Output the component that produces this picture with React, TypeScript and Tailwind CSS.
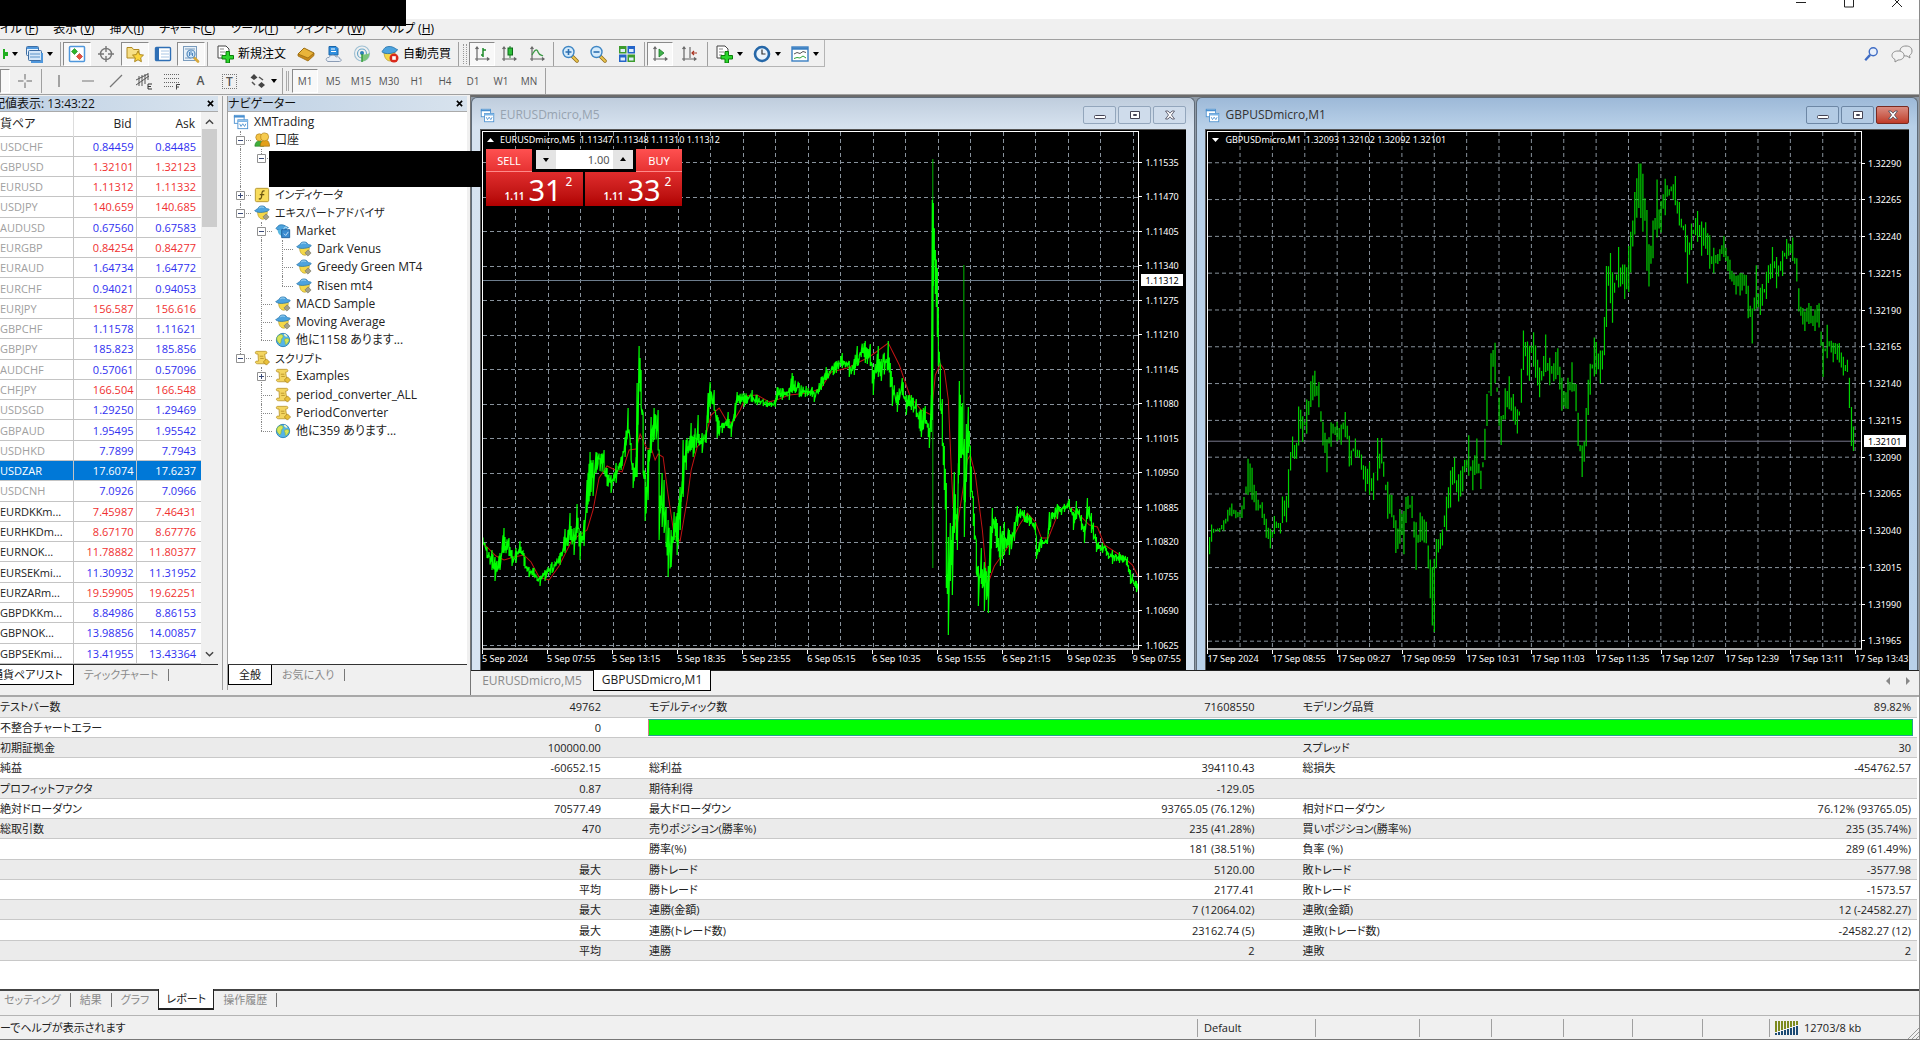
import type { ReactNode } from "react"
import clsx from "clsx"

type Bar = [number, number, number]

const quotes: [string, string, string, string][] = [
  ["USDCHF", "0.84459", "0.84485", "up"],
  ["GBPUSD", "1.32101", "1.32123", "down"],
  ["EURUSD", "1.11312", "1.11332", "down"],
  ["USDJPY", "140.659", "140.685", "down"],
  ["AUDUSD", "0.67560", "0.67583", "up"],
  ["EURGBP", "0.84254", "0.84277", "down"],
  ["EURAUD", "1.64734", "1.64772", "up"],
  ["EURCHF", "0.94021", "0.94053", "up"],
  ["EURJPY", "156.587", "156.616", "down"],
  ["GBPCHF", "1.11578", "1.11621", "up"],
  ["GBPJPY", "185.823", "185.856", "up"],
  ["AUDCHF", "0.57061", "0.57096", "up"],
  ["CHFJPY", "166.504", "166.548", "down"],
  ["USDSGD", "1.29250", "1.29469", "up"],
  ["GBPAUD", "1.95495", "1.95542", "up"],
  ["USDHKD", "7.7899", "7.7943", "up"],
  ["USDZAR", "17.6074", "17.6237", "selected"],
  ["USDCNH", "7.0926", "7.0966", "up"],
  ["EURDKKm...", "7.45987", "7.46431", "down"],
  ["EURHKDm...", "8.67170", "8.67776", "down"],
  ["EURNOK...", "11.78882", "11.80377", "down"],
  ["EURSEKmi...", "11.30932", "11.31952", "up"],
  ["EURZARm...", "19.59905", "19.62251", "down"],
  ["GBPDKKm...", "8.84986", "8.86153", "up"],
  ["GBPNOK...", "13.98856", "14.00857", "up"],
  ["GBPSEKmi...", "13.41955", "13.43364", "up"],
]

// guides: one character per indent column
// "|" line, "t" branch, "l" last branch, "-" open node, "+" closed node, "e" open last node
const tree: { guides: string; icon: string; label: string }[] = [
  { guides: "", icon: "windows", label: "XMTrading" },
  { guides: "-", icon: "accounts", label: "口座" },
  { guides: "|e", icon: "", label: "" },
  { guides: "|", icon: "", label: "" },
  { guides: "+", icon: "indicator", label: "インディケータ" },
  { guides: "-", icon: "expert", label: "エキスパートアドバイザ" },
  { guides: "|-", icon: "market", label: "Market" },
  { guides: "||t", icon: "expert", label: "Dark Venus" },
  { guides: "||t", icon: "expert", label: "Greedy Green MT4" },
  { guides: "||l", icon: "expert", label: "Risen mt4" },
  { guides: "|t", icon: "expert", label: "MACD Sample" },
  { guides: "|t", icon: "expert", label: "Moving Average" },
  { guides: "|l", icon: "globe", label: "他に1158 あります..." },
  { guides: "e", icon: "script", label: "スクリプト" },
  { guides: " +", icon: "script", label: "Examples" },
  { guides: " t", icon: "script", label: "period_converter_ALL" },
  { guides: " t", icon: "script", label: "PeriodConverter" },
  { guides: " l", icon: "globe", label: "他に359 あります..." },
]

const report: string[][] = [
  ["テストバー数", "49762", "モデルティック数", "71608550", "モデリング品質", "89.82%"],
  ["不整合チャートエラー", "0", "bar"],
  ["初期証拠金", "100000.00", "", "", "スプレッド", "30"],
  ["純益", "-60652.15", "総利益", "394110.43", "総損失", "-454762.57"],
  ["プロフィットファクタ", "0.87", "期待利得", "-129.05", "", ""],
  ["絶対ドローダウン", "70577.49", "最大ドローダウン", "93765.05 (76.12%)", "相対ドローダウン", "76.12% (93765.05)"],
  ["総取引数", "470", "売りポジション(勝率%)", "235 (41.28%)", "買いポジション(勝率%)", "235 (35.74%)"],
  ["", "", "勝率(%)", "181 (38.51%)", "負率 (%)", "289 (61.49%)"],
  ["", "最大", "勝トレード", "5120.00", "敗トレード", "-3577.98"],
  ["", "平均", "勝トレード", "2177.41", "敗トレード", "-1573.57"],
  ["", "最大", "連勝(金額)", "7 (12064.02)", "連敗(金額)", "12 (-24582.27)"],
  ["", "最大", "連勝(トレード数)", "23162.74 (5)", "連敗(トレード数)", "-24582.27 (12)"],
  ["", "平均", "連勝", "2", "連敗", "2"],
]

const eurusd: Bar[] = [
  [483, 533, 541], [488, 547, 558], [493, 550, 570], [496, 557, 581], [501, 553, 570], [505, 528, 553],
  [510, 538, 556], [513, 550, 566], [517, 548, 563], [521, 541, 553], [525, 553, 566], [530, 567, 577],
  [535, 568, 577], [541, 577, 586], [546, 570, 581], [553, 562, 573], [561, 553, 565], [566, 529, 553],
  [569, 530, 546], [571, 513, 540], [575, 528, 555], [578, 504, 533], [581, 533, 560], [585, 520, 546],
  [588, 480, 513], [591, 452, 496], [594, 460, 496], [597, 452, 473], [605, 450, 473], [608, 468, 486],
  [612, 475, 493], [617, 463, 483], [622, 457, 470], [626, 437, 457], [629, 408, 433], [632, 443, 460],
  [634, 463, 488], [637, 457, 477], [638, 383, 477], [640, 346, 383], [642, 370, 407], [644, 413, 473],
  [646, 473, 521], [649, 450, 500], [652, 417, 453], [655, 408, 440], [659, 410, 450], [660, 450, 540],
  [663, 473, 527], [665, 480, 533], [667, 507, 547], [669, 520, 577], [672, 530, 567], [675, 512, 540],
  [678, 513, 555], [681, 487, 530], [684, 440, 497], [687, 440, 470], [692, 423, 450], [694, 437, 457],
  [699, 415, 443], [703, 433, 453], [707, 430, 443], [709, 393, 423], [711, 382, 407], [715, 390, 410],
  [718, 415, 438], [723, 423, 433], [729, 412, 428], [732, 423, 437], [736, 403, 418], [738, 392, 403],
  [745, 393, 407], [753, 390, 402], [758, 395, 405], [768, 400, 407], [776, 400, 407], [778, 387, 400],
  [783, 388, 400], [790, 388, 400], [793, 373, 393], [800, 383, 397], [813, 387, 397], [815, 393, 402],
  [822, 377, 390], [827, 367, 380], [837, 361, 373], [843, 353, 368], [850, 361, 377], [855, 359, 375],
  [858, 346, 366], [866, 341, 363], [871, 344, 366], [874, 370, 395], [879, 346, 377], [882, 359, 381],
  [889, 341, 370], [893, 377, 406], [898, 392, 412], [903, 378, 395], [907, 395, 415], [912, 395, 410],
  [917, 399, 417], [922, 410, 437], [926, 406, 423], [930, 428, 448], [932, 395, 432], [933, 200, 420],
  [934, 203, 286], [936, 250, 294], [938, 268, 337], [939, 308, 366], [941, 366, 410], [943, 399, 446],
  [945, 446, 490], [947, 483, 588], [949, 537, 635], [951, 523, 581], [953, 526, 595], [955, 472, 533],
  [958, 508, 550], [960, 381, 475], [963, 403, 453], [965, 439, 537], [967, 424, 482], [969, 407, 453],
  [971, 446, 497], [974, 497, 526], [977, 541, 573], [979, 566, 606], [982, 548, 584], [985, 562, 611],
  [989, 566, 613], [991, 526, 573], [993, 508, 533], [997, 519, 548], [1001, 526, 566], [1005, 522, 555],
  [1010, 530, 555], [1015, 522, 541], [1018, 506, 526], [1025, 510, 522], [1030, 515, 526], [1036, 522, 532],
  [1037, 537, 559], [1042, 537, 548], [1048, 539, 544], [1050, 512, 530], [1058, 504, 519], [1065, 504, 512],
  [1070, 499, 508], [1074, 512, 530], [1077, 501, 519], [1082, 515, 530], [1085, 526, 543], [1088, 498, 519],
  [1092, 513, 533], [1097, 537, 552], [1103, 543, 553], [1113, 550, 564], [1120, 552, 563], [1128, 557, 566],
  [1131, 570, 584], [1137, 581, 592], [1140, 583, 588],
]

const average =
  "483,542 497,556 505,560 515,557 525,555 532,562 540,577 550,580 560,566 573,540 588,530 594,510 600,478 608,466 616,470 623,472 630,450 637,449 641,434 648,449 652,448 656,460 659,454 664,457 669,495 675,535 681,541 688,500 692,470 698,447 706,438 712,415 720,408 727,420 733,423 741,410 747,396 758,395 770,402 780,399 790,395 810,393 822,388 832,372 848,368 870,357 889,343 900,365 911,397 922,410 932,415 936,375 941,364 945,370 949,400 952,470 954,510 957,530 962,500 968,460 971,455 976,475 983,530 988,585 995,566 1010,545 1020,525 1028,513 1036,522 1042,538 1049,538 1060,510 1068,505 1080,515 1090,525 1098,527 1105,545 1125,558 1133,565 1139,577"

const gbpusd: Bar[] = [
  [42, 1170, 1240], [50, 1115, 1165], [55, 1128, 1138], [75, 1112, 1138], [85, 1080, 1110], [95, 1062, 1095],
  [105, 1085, 1102], [118, 1065, 1100], [128, 945, 1040], [137, 965, 1050], [148, 1040, 1085], [160, 1060, 1100],
  [170, 1110, 1160], [178, 1130, 1180], [187, 1090, 1135], [200, 1115, 1140], [205, 1010, 1100], [211, 1060, 1120],
  [218, 950, 1060], [225, 890, 945], [233, 925, 955], [240, 775, 900], [247, 840, 905], [255, 800, 890],
  [263, 755, 820], [272, 718, 785], [283, 755, 820], [290, 850, 910], [299, 900, 985], [306, 855, 920],
  [320, 850, 900], [328, 870, 920], [337, 818, 880], [348, 895, 975], [360, 895, 945], [372, 930, 965],
  [380, 970, 1030], [390, 955, 1040], [400, 985, 1055], [407, 895, 1010], [417, 895, 960], [428, 1000, 1105],
  [438, 1035, 1090], [448, 1110, 1195], [458, 1070, 1160], [464, 1090, 1210], [470, 1040, 1100], [484, 1045, 1100],
  [492, 1120, 1250], [500, 1085, 1160], [513, 1110, 1165], [520, 1200, 1280], [527, 1230, 1393], [531, 1200, 1393], [535, 1150, 1215],
  [548, 1130, 1170], [557, 1040, 1130], [567, 965, 1060], [574, 945, 1010], [582, 990, 1060], [592, 965, 1030],
  [605, 885, 990], [612, 960, 1035], [622, 895, 985], [630, 985, 1030], [638, 900, 980], [643, 790, 870],
  [652, 680, 790], [660, 630, 740], [668, 770, 840], [674, 840, 915], [682, 770, 850], [692, 735, 820],
  [700, 780, 850], [711, 830, 890], [716, 760, 840], [722, 618, 720], [735, 660, 750], [742, 608, 700],
  [750, 670, 750], [758, 720, 795], [769, 620, 720], [778, 690, 760], [790, 680, 750], [796, 662, 730],
  [805, 740, 825], [818, 740, 820], [828, 695, 770], [836, 760, 830], [841, 850, 940], [848, 920, 1000],
  [856, 840, 940], [862, 740, 830], [873, 632, 740], [880, 650, 730], [888, 670, 755], [895, 640, 710],
  [900, 460, 620], [908, 402, 530], [915, 480, 610], [928, 398, 500], [938, 460, 540], [948, 410, 530],
  [955, 350, 450], [963, 250, 360], [970, 190, 300], [975, 190, 330], [980, 220, 370], [986, 260, 440], [992, 400, 510],
  [1000, 350, 440], [1010, 230, 380], [1018, 290, 370], [1028, 225, 320], [1048, 213, 290], [1058, 290, 350],
  [1070, 340, 400], [1076, 380, 510], [1085, 340, 400], [1098, 310, 390], [1105, 340, 430], [1113, 335, 400],
  [1125, 380, 470], [1133, 410, 472], [1145, 410, 440], [1154, 375, 430], [1165, 430, 480], [1178, 480, 525],
  [1190, 470, 530], [1200, 465, 500], [1207, 510, 600], [1216, 570, 660], [1222, 440, 560], [1232, 510, 580],
  [1245, 470, 540], [1257, 400, 480], [1267, 430, 510], [1280, 415, 480], [1290, 380, 430], [1302, 380, 440],
  [1312, 440, 500], [1316, 530, 590], [1328, 570, 620], [1338, 545, 600], [1348, 570, 625], [1358, 540, 600],
  [1367, 650, 740], [1378, 595, 680], [1388, 650, 700], [1402, 650, 700], [1412, 690, 738], [1422, 695, 750],
  [1427, 800, 910], [1436, 890, 940],
]

// walks the high/low envelope and gives the bars a little jitter
const expand = (keys: Bar[], step: number, jitter: number): Bar[] => {
  let seed = 7
  const rand = () => {
    seed = (seed * 16807) % 2147483647
    return seed / 2147483647
  }
  const out: Bar[] = []
  let k = 0
  for (let x = keys[0][0]; x <= keys[keys.length - 1][0]; x += step) {
    while (k < keys.length - 2 && keys[k + 1][0] < x) k++
    const [ax, at, ab] = keys[k]
    const [bx, bt, bb] = keys[k + 1]
    const near = Math.abs(x - ax) < step / 2 || Math.abs(x - bx) < step / 2
    const f = (x - ax) / (bx - ax)
    const top = at + (bt - at) * f
    const bottom = ab + (bb - ab) * f
    const h = near ? 0 : (bottom - top) * jitter
    out.push([x, top + rand() * h, bottom - rand() * h])
  }
  return out
}

const zigzag = (keys: Bar[]) =>
  expand(keys, 1, 0.7).map(([x, t, b], i) => `${i ? "L" : "M"}${x} ${t.toFixed(1)}V${b.toFixed(1)}`).join("")

const sticks = (keys: Bar[]) =>
  expand(keys, 4.36, 0.5).map(([x, t, b]) => `M${x.toFixed(1)} ${b.toFixed(0)}V${t.toFixed(0)}`).join("")

const range = (n: number) => Array.from({ length: n }, (_, i) => i)

/* ---------- icons ---------- */

const Svg = ({ children, className = "size-[18px]" }: { children: ReactNode; className?: string }) => (
  <svg viewBox="0 0 18 18" fill="none" className={clsx("shrink-0", className)} aria-hidden="true">
    {children}
  </svg>
)

const PlusDoc = () => (
  <Svg>
    <path d="M2 1h8l3 3v9H2z" fill="#fff" stroke="#444" />
    <path d="M4 4h4M4 7h5M4 10h3" stroke="#888" />
    <path d="M10 6.500h3.500v4H17.500v3.500h-4v4H10v-4H6v-3.500h4z" fill="#2bd52b" stroke="#0b7d0b" />
  </Svg>
)

const WindowsIcon = () => (
  <Svg>
    <rect x="1.500" y="1.500" width="11" height="9" fill="#fff" stroke="#4a90d0" />
    <path d="M1 3h12" stroke="#4a90d0" strokeWidth="2" />
    <rect x="5.500" y="6.500" width="11" height="10" fill="#fff" stroke="#4a90d0" />
    <path d="M5 8h12" stroke="#7fb6e6" strokeWidth="2" />
    <path d="m7.500 11 1.500 3 2-3 2 3 1.500-3" stroke="#4a90d0" />
  </Svg>
)

const LayersIcon = () => (
  <Svg>
    <rect x="1.500" y="1.500" width="12" height="9" rx="1" fill="#e9f3fc" stroke="#3d6ea5" />
    <path d="M2 3h11" stroke="#4f97dc" strokeWidth="2" />
    <rect x="3.500" y="5.500" width="13" height="10" rx="1" fill="#d4e7f8" stroke="#3d6ea5" />
    <path d="M5 9h10M5 12h10" stroke="#5b93c8" />
    <path d="M6 17h11V8" stroke="#4f97dc" strokeWidth="2" />
  </Svg>
)

const ExpertIcon = () => (
  <Svg>
    <path d="M4 7.500c0 6 3 8.500 6 8.500s5-4 5-9z" fill="#f5d848" stroke="#a68a1d" strokeWidth=".6" />
    <path d="M.8 6.500C2 4.500 4.500 5 5 3c.8-2.600 7-2.600 8 0 .6 1.500 3.500.8 4.200 2.200-1 2.800-13 4.800-16.400 1.300z" fill="#4da3dd" stroke="#1f6fa8" strokeWidth=".8" />
    <path d="M6 3.200c1-1.200 4-1.200 5-.4" stroke="#b6e0f7" />
    <path d="m13.500 10 3.500 3.500-3.500 3.500-3.500-3.500z" fill="#a3a089" stroke="#77745f" strokeWidth=".7" />
  </Svg>
)

const ScriptIcon = () => (
  <Svg>
    <path d="M3 1.500h10c2 0 2 3 0 3h-1l1 7v4H4c-3 0-3-3-1-3h2l-.5-8H3c-2 0-2-3 0-3z" fill="#f3d560" stroke="#b8932a" strokeWidth=".9" />
    <path d="M6.500 7h4M7 9.500h4" stroke="#b8932a" />
    <path d="m14 10 3.500 3.500L14 17l-3.500-3.500z" fill="#e9c03a" stroke="#a57c15" strokeWidth=".8" />
  </Svg>
)

const treeIcons: Record<string, ReactNode> = {
  windows: <WindowsIcon />,
  expert: <ExpertIcon />,
  script: <ScriptIcon />,
  accounts: (
    <Svg>
      <path d="M1 16c0-4 2-6 5-6s5 2 5 6z" fill="#3fae3a" stroke="#25802a" strokeWidth=".7" />
      <circle cx="6" cy="6" r="4" fill="#f3c244" stroke="#a97a13" strokeWidth=".7" />
      <path d="M7 16c0-4 2-7 5.500-7s5 3 5 7z" fill="#e3a01b" stroke="#9b6b0e" strokeWidth=".7" />
      <circle cx="12" cy="5.500" r="4.500" fill="#f6cb4f" stroke="#a97a13" strokeWidth=".7" />
    </Svg>
  ),
  indicator: (
    <Svg>
      <rect x="1.500" y="1.500" width="15" height="15" rx="1.500" fill="#f8dc5c" stroke="#b1922a" />
      <path d="M12 4.500c-4-1-3 4-3.500 6.500S6.500 14 5.500 13M6.500 8.500h5" stroke="#6b5510" strokeWidth="1.400" />
    </Svg>
  ),
  market: (
    <Svg>
      <path d="M1 6c2-1 2-4 6-4s5 2 8 3c-1 4-12 5-14 1z" fill="#4da3dd" stroke="#1f6fa8" strokeWidth=".8" />
      <path d="M3 8c0 4 2 6 5 7V8z" fill="#59b7e0" />
      <path d="M7.500 7.500h9v9h-9z" fill="#3a8bd0" stroke="#1d5d99" />
      <path d="M10 7c0-3 4-3 4 0M10 12l2 2 3-4" stroke="#cfe8fa" />
    </Svg>
  ),
  globe: (
    <Svg>
      <circle cx="9" cy="9" r="7.500" fill="#55b4e8" stroke="#2b7fb5" />
      <path d="M4 4c3-2 5-1 5 1S7 7 7 9s-1 5-2 4-3-3-3-5 1-3 2-4zM11 8c2-1 4-1 5 1-1 3-3 5-4 5s0-3-1-4 0-1 0-2z" fill="#d7e45a" stroke="#7fae2f" strokeWidth=".6" />
      <path d="M10 2c2 0 3 1 4 3-1 1-4 0-4-3z" fill="#f4f7c4" />
    </Svg>
  ),
}

const Axes = ({ children }: { children: ReactNode }) => (
  <Svg>
    <path d="M4 2v14M2 14h14M2.500 4 4 2l1.500 2M14 12.500l2 1.500-2 1.500" stroke="#666" strokeWidth="1.200" />
    {children}
  </Svg>
)

const Magnifier = ({ sign }: { sign: "plus" | "minus" }) => (
  <Svg>
    <path d="m11 11 5 5" stroke="#8f6a17" strokeWidth="3.500" strokeLinecap="round" />
    <path d="m11 11 5 5" stroke="#eac54d" strokeWidth="2" strokeLinecap="round" />
    <circle cx="7.500" cy="7" r="5.500" fill="#d5ebfb" stroke="#3f86c4" strokeWidth="1.400" />
    <path d={sign === "plus" ? "M4.500 7h6M7.500 4v6" : "M4.500 7h6"} stroke="#2d6fb0" strokeWidth="1.600" />
  </Svg>
)

const Caret = () => (
  <svg viewBox="0 0 6 4" className="h-1 w-[6px] shrink-0" aria-hidden="true">
    <path d="M0 0h6L3 4z" fill="#000" />
  </svg>
)

/* ---------- toolbars ---------- */

const ToolButton = ({ label, pressed, className = "w-7", children }: { label: string; pressed?: boolean; className?: string; children: ReactNode }) => (
  <button
    type="button"
    aria-label={label}
    className={clsx(
      "flex h-6 shrink-0 items-center justify-center gap-1 border",
      pressed ? "border-t-[#8a8a8a] border-l-[#8a8a8a] border-r-white border-b-white bg-[#f8f8f8]" : "border-transparent",
      className
    )}
  >
    {children}
  </button>
)

const Divider = () => <div className="mx-[2px] h-6 w-px shrink-0 bg-[#a0a0a0]" />

const Grip = () => <div className="mx-[2px] h-5 w-1 shrink-0 border-x border-dotted border-[#999]" />

const menus: [string, string][] = [
  ["イル (", "F"],
  ["表示 (", "V"],
  ["挿入(", "I"],
  ["チャート(", "C"],
  ["ツール(", "T"],
  ["ウィンドウ (", "W"],
  ["ヘルプ (", "H"],
]

const TopBars = () => (
  <header>
    <div className="flex h-[19px] items-start justify-end gap-9 bg-white pr-4">
      <button type="button" aria-label="最小化">
        <svg viewBox="0 0 12 9" fill="none" className="h-[9px] w-3"><path d="M1 2.500h10" stroke="#222" /></svg>
      </button>
      <button type="button" aria-label="最大化">
        <svg viewBox="0 0 12 9" fill="none" className="h-[9px] w-3"><path d="M1.500-2v9h9v-9" stroke="#222" /></svg>
      </button>
      <button type="button" aria-label="閉じる">
        <svg viewBox="0 0 12 9" fill="none" className="h-[9px] w-3"><path d="m1-3 10 10M11-3 1 7" stroke="#222" /></svg>
      </button>
    </div>
    <nav className="flex h-[21px] items-center gap-[15px] border-b border-[#a0a0a0] text-[12px] text-black">
      {menus.map(([label, key]) => (
        <button key={key} type="button" className="whitespace-pre leading-4">
          {label}
          <u>{key}</u>)
        </button>
      ))}
    </nav>

    <div className="flex h-[27px] items-center justify-between">
      <div className="flex h-full items-center border-r border-b border-[#b4b4b4] pt-px">
        <ToolButton label="新規チャート" className="w-5">
          <svg viewBox="0 0 5 12" className="h-3 w-[5px]"><path d="M0 4h5v4H0zM0 1h2v10H0z" fill="#1fae1f" /></svg>
          <Caret />
        </ToolButton>
        <ToolButton label="組表示" className="w-[38px]"><LayersIcon /><Caret /></ToolButton>
        <Divider />
        <ToolButton label="気配値表示" pressed>
          <Svg>
            <rect x="1.500" y="1.500" width="15" height="15" rx="1" fill="#fff" stroke="#4f97dc" strokeWidth="1.500" />
            <path d="M6.500 3.500 9.500 6.500 6.500 9.500 3.500 6.500z" fill="#2cb52c" stroke="#1b7d1b" strokeWidth=".6" />
            <path d="M11.500 8.500 14.500 11.500 11.500 14.500 8.500 11.500z" fill="#e8503f" stroke="#b32518" strokeWidth=".6" />
          </Svg>
        </ToolButton>
        <ToolButton label="データウィンドウ" className="w-[30px]">
          <Svg><circle cx="9" cy="9" r="5.500" stroke="#777" strokeWidth="1.400" /><path d="M9 1v6M9 11v6M1 9h6M11 9h6" stroke="#777" strokeWidth="1.400" /></Svg>
        </ToolButton>
        <ToolButton label="ナビゲーター" pressed>
          <Svg>
            <path d="M1 2.500h5l1.500 2H13V13H1z" fill="#f7df86" stroke="#b08a22" />
            <path d="m12 6 1.700 3.600 3.800.5-2.800 2.700.7 3.900-3.400-1.900-3.400 1.900.7-3.900-2.800-2.700 3.800-.5z" fill="#fbd43c" stroke="#a57f16" strokeWidth=".9" />
          </Svg>
        </ToolButton>
        <ToolButton label="ターミナル">
          <Svg>
            <rect x="1.500" y="2.500" width="15" height="13" rx="1" fill="#fff" stroke="#2f6fb5" strokeWidth="1.400" />
            <path d="M3.500 3v12" stroke="#2f6fb5" strokeWidth="3" />
            <path d="M7 6h8M7 9h8M7 12h8" stroke="#a9c6e4" />
          </Svg>
        </ToolButton>
        <ToolButton label="ストラテジーテスター" pressed>
          <Svg>
            <rect x="1.500" y="1.500" width="13" height="14" fill="#e7f0f8" stroke="#7a9cbd" />
            <path d="M3 4h10M3 13h6" stroke="#7a9cbd" />
            <path d="m11.500 12 4.500 4.500" stroke="#d8a93c" strokeWidth="2.600" strokeLinecap="round" />
            <circle cx="9" cy="9" r="4" fill="#cfe5f7" stroke="#5a8dbd" strokeWidth="1.200" />
            <path d="M7.500 7v4M9 6v4M10.500 8v3" stroke="#2d6fb0" strokeWidth=".8" />
          </Svg>
        </ToolButton>
        <Divider />
        <ToolButton label="新規注文" className="w-[82px] text-[12px]">
          <PlusDoc />
          新規注文
        </ToolButton>
        <ToolButton label="MetaEditor">
          <Svg>
            <path d="m1 9 6-6 10 5-6 7z" fill="#e9b43a" stroke="#9c6d12" />
            <path d="m1 9 10 4 6-5v2.500L11 16 1 11z" fill="#c98a1b" stroke="#9c6d12" strokeWidth=".8" />
          </Svg>
        </ToolButton>
        <ToolButton label="ホスティング">
          <Svg>
            <path d="M4 1.500h7l2 2V10H4z" fill="#2f8fe0" stroke="#1c66a8" />
            <path d="M6 4h4M6 6.500h5" stroke="#fff" />
            <path d="M3 16.500c-3-1-2-4.500 1-4 1-3 6-3 7-.5 2-1 4 .5 3.500 1.800 2.500 0 2 2.700 0 2.700z" fill="#e8eef6" stroke="#8b9cb5" />
          </Svg>
        </ToolButton>
        <ToolButton label="シグナル">
          <Svg>
            <circle cx="9" cy="8.500" r="7.500" stroke="#9fc0d3" strokeWidth="1.200" />
            <circle cx="9" cy="8.500" r="4.500" stroke="#6aa7c8" strokeWidth="1.200" />
            <path d="M9 9c3 1 6 0 7.500-1 0 5-3.500 8-7.500 8.500z" fill="#7cc47a" />
            <circle cx="9" cy="8" r="2" fill="#2b7fb5" />
            <path d="M9 9v8" stroke="#2f9a35" strokeWidth="1.400" />
          </Svg>
        </ToolButton>
        <ToolButton label="自動売買" className="w-[80px] text-[12px]">
          <Svg>
            <path d="M3 7c0 6 3 9 6 9s5-4 5-9z" fill="#f5d848" stroke="#a68a1d" strokeWidth=".6" />
            <path d="M.8 6.500c2-1 2-5 7.200-5s6 2.500 8.500 3c-1 4.500-13.700 5.500-15.700 2z" fill="#4da3dd" stroke="#1f6fa8" strokeWidth=".8" />
            <circle cx="13" cy="13" r="4.500" fill="#d9291c" />
            <rect x="11.200" y="11.200" width="3.600" height="3.600" fill="#fff" />
          </Svg>
          自動売買
        </ToolButton>
        <Divider />
        <Grip />
        <ToolButton label="バーチャート" pressed className="w-[26px]"><Axes><path d="M10 3v9M8 10h2M10 5h3" stroke="#1c8a2a" strokeWidth="1.500" /></Axes></ToolButton>
        <ToolButton label="ローソク足"><Axes><path d="M10 1v12" stroke="#1c8a2a" /><rect x="8" y="3" width="4.500" height="7" fill="#2fc13a" stroke="#0f6b1a" /></Axes></ToolButton>
        <ToolButton label="ラインチャート"><Axes><path d="M4 10c3-6 5-6 6-3s3 3 5 4" stroke="#3f9a48" strokeWidth="1.300" /></Axes></ToolButton>
        <Divider />
        <ToolButton label="ズームイン"><Magnifier sign="plus" /></ToolButton>
        <ToolButton label="ズームアウト"><Magnifier sign="minus" /></ToolButton>
        <ToolButton label="整列" className="w-[30px]">
          <Svg>
            <path d="M1 1h7.500v7.500H1zM9.500 9.500H17V17H9.500z" fill="#3d9c2d" />
            <path d="M9.500 1H17v7.500H9.500zM1 9.500h7.500V17H1z" fill="#2464c8" />
            <path d="M2.500 4H7v3H2.500zM11 4h4.500v3H11zM2.500 12.500H7v3H2.500zM11 12.500h4.500v3H11z" fill="#dfeefb" />
          </Svg>
        </ToolButton>
        <Divider />
        <ToolButton label="自動スクロール" pressed className="w-[26px]"><Axes><path d="m8 4 5 4-5 4z" fill="#3fb24b" stroke="#1c7a28" strokeWidth=".8" /></Axes></ToolButton>
        <ToolButton label="チャートシフト" className="w-8"><Axes><path d="M10 2v11" stroke="#555" /><path d="M17 8h-5m2-2-2 2 2 2" stroke="#a8321f" strokeWidth="1.200" /></Axes></ToolButton>
        <Divider />
        <ToolButton label="インディケーター" className="w-[38px]"><PlusDoc /><Caret /></ToolButton>
        <ToolButton label="時間軸" className="w-[38px]">
          <Svg><circle cx="9" cy="9" r="7" fill="#eaf4fc" stroke="#2567a8" strokeWidth="2.600" /><path d="M9 4.500V9h3.500" stroke="#333" strokeWidth="1.200" /></Svg>
          <Caret />
        </ToolButton>
        <ToolButton label="定型チャート" className="w-[38px]">
          <Svg>
            <rect x="1" y="2" width="16" height="14" fill="#fff" stroke="#3a7fc2" strokeWidth="1.400" />
            <path d="M1 3.500h16" stroke="#3a7fc2" strokeWidth="2.500" />
            <path d="m3 9 3-1.500 3 1 3-2 3 1" stroke="#555" />
            <path d="m3 13.500 3-1 3 .5 3-2 3 2" stroke="#2fa33a" />
          </Svg>
          <Caret />
        </ToolButton>
      </div>
      <div className="flex items-center gap-3 pr-[6px]">
        <button type="button" aria-label="検索">
          <Svg className="size-4"><circle cx="11.500" cy="6.500" r="4.500" fill="#e9f0fb" stroke="#3f6cc4" strokeWidth="1.600" /><path d="m8 10-5.500 6" stroke="#3f6cc4" strokeWidth="2.600" /></Svg>
        </button>
        <button type="button" aria-label="チャット">
          <svg viewBox="0 0 22 18" fill="#f2f2f2" stroke="#8c8c8c" className="h-[18px] w-[22px]">
            <path d="M15 1c4 0 6 2 6 5 0 2-1 3.500-2.500 4.500L19 13l-3-2c-5 0-7-2-7-5s2-5 6-5z" />
            <path d="M7 6c4 0 6 2 6 4.500S11 15 7 15l-3 2v-2.500C2 13.500 1 12 1 10.500 1 8 3 6 7 6z" />
          </svg>
        </button>
      </div>
    </div>

    <div className="flex h-[27px] items-center pt-px text-[10px] text-[#555]">
      <div className="flex h-full items-center border-r border-[#a0a0a0]">
        <ToolButton label="カーソル" pressed className="w-[10px]">{null}</ToolButton>
        <ToolButton label="クロスヘア" className="w-[29px]"><Svg><path d="M9 2v5.500M9 10.500V16M2 9h5.500M10.500 9H16" stroke="#666" /></Svg></ToolButton>
        <Divider />
        <ToolButton label="垂直線" className="w-[29px]"><Svg><path d="M9 3v12" stroke="#555" /></Svg></ToolButton>
        <ToolButton label="水平線" className="w-[29px]"><Svg><path d="M3 9h12" stroke="#777" /></Svg></ToolButton>
        <ToolButton label="トレンドライン"><Svg><path d="M3 15 15 3" stroke="#777" strokeWidth="1.200" /></Svg></ToolButton>
        <ToolButton label="平行チャネル">
          <Svg>
            <path d="m1 13 13-9M1 8l12-6M4 4v10M7 3v11M10 2v10M13 1v7" stroke="#555" strokeWidth="1" />
            <path d="M13 12h4M13 14.500h3M13 17h4M13 12v5" stroke="#333" />
          </Svg>
        </ToolButton>
        <ToolButton label="フィボナッチ">
          <Svg>
            <path d="M1 2.500h15M1 6.500h15M1 10.500h15M1 14.500h9" stroke="#666" strokeDasharray="1 1" />
            <path d="M13.500 17.500v-5h3.500M13.500 15H16" stroke="#444" />
          </Svg>
        </ToolButton>
        <ToolButton label="テキスト" className="w-[29px] text-[12px] font-semibold">A</ToolButton>
        <ToolButton label="テキストラベル" className="w-[29px] text-[12px] font-semibold">
          <span className="border border-dotted border-[#777] px-[3px] leading-[13px]">T</span>
        </ToolButton>
        <ToolButton label="矢印" className="w-[38px]">
          <Svg>
            <path d="m5 2 3.500 3.500L5 8 1.500 5.500zM12.500 10l3.500 3-3.500 3L9 13z" fill="#444" />
            <path d="m3 10 3 3M10 5l4 3" stroke="#555" strokeWidth="1.500" />
          </Svg>
          <Caret />
        </ToolButton>
      </div>
      <div className="flex h-full items-center border-r border-[#a0a0a0] pr-[2px]">
        <div className="mx-[3px] h-5 w-[3px] border-x border-[#aaa]" />
        {["M1", "M5", "M15", "M30", "H1", "H4", "D1", "W1", "MN"].map((tf) => (
          <ToolButton key={tf} label={tf} pressed={tf === "M1"} className={tf === "M1" ? "mr-px w-[26px]" : "w-7"}>
            {tf}
          </ToolButton>
        ))}
      </div>
    </div>
  </header>
)

/* ---------- side panels ---------- */

const PanelTitle = ({ children, clipped }: { children: ReactNode; clipped?: boolean }) => (
  <div className="flex h-4 shrink-0 items-center justify-between overflow-hidden border-b border-[#aaa] bg-linear-to-r from-[#bfd1e4] to-[#d8e3ee] pr-1 text-[12px] leading-none text-[#111]">
    <h2 className={clsx("whitespace-nowrap", clipped && "-ml-[7px]")}>{children}</h2>
    <button type="button" aria-label="閉じる">
      <svg viewBox="0 0 8 8" className="size-[7px]"><path d="m1 1 6 6M7 1 1 7" stroke="#000" strokeWidth="1.800" /></svg>
    </button>
  </div>
)

const TabStrip = ({ tabs, active, clipped }: { tabs: string[]; active: string; clipped?: boolean }) => (
  <div role="tablist" className="flex h-[26px] shrink-0 items-start overflow-hidden border-t border-[#333] bg-[#f0f0f0] text-[11px] whitespace-nowrap">
    {tabs.map((tab) => (
      <button
        key={tab}
        type="button"
        role="tab"
        aria-selected={tab === active}
        className={clsx(
          "-mt-px flex h-[21px] items-center px-[10px] leading-none",
          tab === active ? "border-x border-b border-black bg-white text-[#111]" : "text-[#8a8a8a]",
          clipped && tab === active && "-ml-[19px]"
        )}
      >
        {tab}
      </button>
    ))}
    <span className="mt-1 h-3 w-px bg-[#777]" />
  </div>
)

const quoteColor: Record<string, string> = {
  up: "text-[#3030f0]",
  down: "text-[#f03030]",
  selected: "text-white",
}

const MarketWatch = () => (
  <section className="flex w-[223px] shrink-0 flex-col border-r border-[#a0a0a0] pr-1">
    <PanelTitle clipped>配値表示: 13:43:22</PanelTitle>
    <div className="flex min-h-0 flex-1 bg-white">
      <table className="h-full w-[201px] table-fixed border-collapse text-[11px] leading-none">
        <colgroup>
          <col className="w-[73px]" />
          <col className="w-[63px]" />
          <col className="w-[65px]" />
        </colgroup>
        <thead>
          <tr className="h-6 text-[12px] text-[#222]">
            <th className="text-left font-normal whitespace-nowrap">貨ペア</th>
            <th className="border-l border-[#ddd] pr-1 text-right font-normal">Bid</th>
            <th className="border-l border-[#ddd] pr-[6px] text-right font-normal">Ask</th>
          </tr>
        </thead>
        <tbody>
          {quotes.map(([symbol, bid, ask, state]) => (
            <tr key={symbol} className={clsx("border-y border-[#c4c4c4]", state === "selected" && "bg-[#0078d7]")}>
              <td className={clsx("whitespace-nowrap", state === "selected" ? "text-white" : symbol.includes("...") ? "text-[#222]" : "text-[#a0a0a0]")}>
                {symbol}
              </td>
              <td className={clsx("border-l border-[#c4c4c4] pr-[2px] text-right", quoteColor[state])}>{bid}</td>
              <td className={clsx("border-l border-[#c4c4c4] pr-[5px] text-right", quoteColor[state])}>{ask}</td>
            </tr>
          ))}
        </tbody>
      </table>
      <div className="flex flex-1 flex-col items-center bg-[#f0f0f0] py-[7px]">
        <svg viewBox="0 0 10 6" fill="none" className="h-[6px] w-[9px]"><path d="m1 5 4-4 4 4" stroke="#444" strokeWidth="1.600" /></svg>
        <div className="mt-1 h-[98px] w-[15px] bg-[#cdcdcd]" />
        <svg viewBox="0 0 10 6" fill="none" className="mt-auto h-[6px] w-[9px]"><path d="m1 1 4 4 4-4" stroke="#444" strokeWidth="1.600" /></svg>
      </div>
    </div>
    <TabStrip tabs={["通貨ペアリスト", "ティックチャート"]} active="通貨ペアリスト" clipped />
  </section>
)

const Guide = ({ kind }: { kind: string }) => {
  const node = kind === "-" || kind === "+" || kind === "e"
  return (
    <span className="relative w-[21px] shrink-0 self-stretch">
      {kind !== " " && (
        <span className={clsx("absolute top-0 left-[10px] border-l border-dotted border-[#888]", kind === "l" || kind === "e" ? "h-1/2" : "h-full")} />
      )}
      {kind !== " " && kind !== "|" && <span className="absolute top-1/2 left-[10px] w-[11px] border-t border-dotted border-[#888]" />}
      {node && (
        <svg viewBox="0 0 9 9" className="absolute top-[5px] left-[6px] size-[9px]">
          <path d="M.5.500h8v8h-8z" fill="#fff" stroke="#919191" />
          <path d={kind === "+" ? "M2 4.500h5M4.500 2v5" : "M2 4.500h5"} stroke="#3a4a78" />
        </svg>
      )}
    </span>
  )
}

const Navigator = () => (
  <section className="ml-1 flex w-[243px] shrink-0 flex-col border-l border-[#a0a0a0] pr-[3px]">
    <PanelTitle>ナビゲーター</PanelTitle>
    <div className="flex-1 bg-white">
      <ul className="grid h-[328px] auto-rows-fr pt-[1px] pl-[2px] text-[12px] text-[#222]">
        {tree.map((row, i) => (
          <li key={i} className="flex min-h-0 items-center leading-none whitespace-nowrap">
            {row.guides.split("").map((kind, j) => (
              <Guide key={j} kind={kind} />
            ))}
            <span className="flex w-[21px] shrink-0 justify-center [&>svg]:size-4">{treeIcons[row.icon]}</span>
            <span className={clsx("pl-[3px]", /^[ァ-ー]/.test(row.label) && "text-[11px]")}>{row.label}</span>
          </li>
        ))}
      </ul>
    </div>
    <TabStrip tabs={["全般", "お気に入り"]} active="全般" />
  </section>
)

/* ---------- chart windows ---------- */

const FrameButton = ({ label, tone, children }: { label: string; tone: string; children: ReactNode }) => (
  <button type="button" aria-label={label} className={clsx("flex h-[18px] w-[33px] items-center justify-center rounded-xs border", tone)}>
    <svg viewBox="0 0 12 10" fill="#fff" stroke="#445" className="h-[10px] w-3">{children}</svg>
  </button>
)

type ChartProps = {
  title: string
  caption: string
  arrow: string
  active?: boolean
  className: string
  prices: string[]
  pricesClass: string
  times: string[]
  current: string
  currentClass: string
  plot: ReactNode
  children?: ReactNode
}

const ChartWindow = (p: ChartProps) => (
  <section
    className={clsx(
      "flex min-w-0 flex-col overflow-hidden rounded-t-md border-x border-t border-[#5f6b78] px-2",
      p.active ? "bg-linear-to-b from-[#9db9d8] via-[#b8d0e8] via-5% to-[#b9d1ea]" : "bg-linear-to-b from-[#bfcddd] via-[#d6e2ef] via-5% to-[#d7e4f2]",
      p.className
    )}
  >
    <div className={clsx("flex h-[31px] shrink-0 items-center gap-[5px] pt-[3px] text-[12px]", p.active ? "text-[#333]" : "text-[#97a3b0]")}>
      <span className="[&>svg]:size-[15px]"><WindowsIcon /></span>
      <h3 className="mr-auto leading-none">{p.title}</h3>
      <div className="flex gap-[2px]">
        <FrameButton label="最小化" tone={p.active ? "border-[#6d87a5] bg-[#b3cbe4]" : "border-[#93a6bc] bg-[#cfdceb]"}>
          <rect x=".5" y="5.500" width="11" height="3" rx="1" />
        </FrameButton>
        <FrameButton label="最大化" tone={p.active ? "border-[#6d87a5] bg-[#b3cbe4]" : "border-[#93a6bc] bg-[#cfdceb]"}>
          <path d="M1.500 1.500h9v7h-9zM4.500 4.500h3v1h-3z" />
        </FrameButton>
        <FrameButton label="閉じる" tone={p.active ? "border-[#7a2a20] bg-linear-to-b from-[#d98b80] to-[#bf3a28]" : "border-[#93a6bc] bg-[#cfdceb]"}>
          <path d="M1.500 1h2.500l2 2.200L8 1h2.500L7.500 5l3 4H8L6 6.800 4 9H1.500l3-4z" strokeWidth=".8" />
        </FrameButton>
      </div>
    </div>
    <div className="flex min-h-0 flex-1 flex-col overflow-hidden border-t border-l border-[#555] bg-black pt-px pl-px text-[9px] leading-none text-white [font-family:'Noto_Sans',sans-serif]">
      <div className="flex min-h-0 flex-1">
        <div className="relative min-w-0 flex-1 border border-b-2 border-white border-b-[#aaa]">
          {p.plot}
          <p className="absolute top-[3px] left-1 flex items-center gap-[6px] text-[9px] whitespace-pre">
            <svg viewBox="0 0 7 4" className="h-1 w-[7px]"><path d={p.arrow} fill="#fff" /></svg>
            {p.caption}
          </p>
          {p.children}
        </div>
        <div className="relative w-[47px] shrink-0">
          <ul className={clsx("flex h-full flex-col justify-between", p.pricesClass)}>
            {p.prices.map((price) => (
              <li key={price} className="flex h-[10px] items-center gap-[3px]">
                <span className="h-px w-[3px] bg-white" />
                {price}
              </li>
            ))}
          </ul>
          <span className={clsx("absolute left-[2px] flex h-3 w-[42px] items-center bg-white pl-1 text-black", p.currentClass)}>{p.current}</span>
        </div>
      </div>
      <ul className="flex h-[20px] shrink-0 pr-[54px]">
        {p.times.map((time) => (
          <li key={time} className="w-0 flex-1 whitespace-nowrap last:w-0 last:flex-none">
            <span className="block h-1 w-px bg-white" />
            <span className="block">{time}</span>
          </li>
        ))}
      </ul>
    </div>
  </section>
)

const OneClick = () => (
  <div className="absolute top-[17px] left-[3px] w-[196px] bg-black text-white">
    <div className="flex h-[23px] items-start justify-between text-[11px]">
      <button type="button" className="h-full w-[46px] border-b border-[#ff8a8a] bg-linear-to-b from-[#ff5050] to-[#e63232]">SELL</button>
      <div className="mt-px flex h-[19px] w-[97px] items-stretch bg-[#e4e4e4]">
        <button type="button" aria-label="減らす" className="flex w-5 items-center justify-center"><Caret /></button>
        <input aria-label="ロット" defaultValue="1.00" className="w-0 flex-1 bg-white pr-[3px] text-right text-[11px] text-[#555]" />
        <button type="button" aria-label="増やす" className="flex w-5 rotate-180 items-center justify-center"><Caret /></button>
      </div>
      <button type="button" className="h-full w-[46px] border-b border-[#ff8a8a] bg-linear-to-b from-[#ff5050] to-[#e63232]">BUY</button>
    </div>
    <div className="flex gap-[2px]">
      {["31", "33"].map((pips) => (
        <div key={pips} className="flex h-[34px] w-[97px] items-end justify-center gap-1 bg-linear-to-b from-[#e02c2c] to-[#b00000] pb-[5px] pl-2">
          <span className="text-[10px] font-semibold">1.11</span>
          <span className="text-[29px] leading-[22px]">{pips}</span>
          <span className="self-start pt-1 text-[12px]">2</span>
        </div>
      ))}
    </div>
  </div>
)

const EurPlot = () => (
  <svg viewBox="484 132 655 516" preserveAspectRatio="none" fill="none" className="absolute inset-0 h-full w-full">
    <g stroke="#88929c" strokeDasharray="4 3" shapeRendering="crispEdges">
      {range(20).map((i) => (
        <path key={i} d={`M${516.5 + i * 32.5} 132v516`} />
      ))}
      {range(15).map((i) => (
        <path key={i} d={`M484 ${162.5 + i * 34.5}h656`} />
      ))}
    </g>
    <path d="M484 280.500h656" stroke="#6d7d8d" />
    <polyline points={average} stroke="#c01414" />
    <path d="M933.500 159V568M964.500 265V500" stroke="#00b800" />
    <path d={zigzag(eurusd)} stroke="#00ff00" strokeWidth="1.200" />
  </svg>
)

const GbpPlot = () => (
  <svg viewBox="43 109 1405 1325" preserveAspectRatio="none" fill="none" className="absolute inset-0 h-full w-full">
    <g stroke="#88929c" strokeDasharray="4 3" shapeRendering="crispEdges">
      {range(20).map((i) => (
        <path key={i} d={`M${112 + i * 69.7} 109V1434`} vectorEffect="non-scaling-stroke" />
      ))}
      {range(14).map((i) => (
        <path key={i} d={`M43 ${188 + i * 94.5}H1448`} vectorEffect="non-scaling-stroke" />
      ))}
    </g>
    <path d="M43 903H1448" stroke="#77778c" vectorEffect="non-scaling-stroke" />
    <path d={sticks(gbpusd)} stroke="#00d200" strokeWidth="1.200" vectorEffect="non-scaling-stroke" />
  </svg>
)

const Charts = () => (
  <main className="flex min-w-0 flex-1 flex-col border-l border-[#777]">
    <div className="flex min-h-0 flex-1 gap-px border-t-2 border-[#6b6b6b] bg-[#8f9aa6] pr-px">
      <ChartWindow
        title="EURUSDmicro,M5"
        caption="EURUSDmicro,M5  1.11347 1.11348 1.11310 1.11312"
        arrow="M0 4h7L3.500 0z"
        className="flex-[724]"
        prices={["1.11535", "1.11470", "1.11405", "1.11340", "1.11275", "1.11210", "1.11145", "1.11080", "1.11015", "1.10950", "1.10885", "1.10820", "1.10755", "1.10690", "1.10625"]}
        pricesClass="pt-[26px]"
        times={["5 Sep 2024", "5 Sep 07:55", "5 Sep 13:15", "5 Sep 18:35", "5 Sep 23:55", "6 Sep 05:15", "6 Sep 10:35", "6 Sep 15:55", "6 Sep 21:15", "9 Sep 02:35", "9 Sep 07:55"]}
        current="1.11312"
        currentClass="top-[143px]"
        plot={<EurPlot />}
      >
        <OneClick />
      </ChartWindow>
      <ChartWindow
        active
        title="GBPUSDmicro,M1"
        caption="GBPUSDmicro,M1  1.32093 1.32102 1.32092 1.32101"
        arrow="M0 0h7L3.500 4z"
        className="flex-[721]"
        prices={["1.32290", "1.32265", "1.32240", "1.32215", "1.32190", "1.32165", "1.32140", "1.32115", "1.32090", "1.32065", "1.32040", "1.32015", "1.31990", "1.31965"]}
        pricesClass="pt-[27px] pb-[4px]"
        times={["17 Sep 2024", "17 Sep 08:55", "17 Sep 09:27", "17 Sep 09:59", "17 Sep 10:31", "17 Sep 11:03", "17 Sep 11:35", "17 Sep 12:07", "17 Sep 12:39", "17 Sep 13:11", "17 Sep 13:43"]}
        current="1.32101"
        currentClass="top-[304px]"
        plot={<GbpPlot />}
      />
    </div>
    <div className="flex h-[25px] shrink-0 items-start justify-between border-t border-[#222] pr-[9px] text-[12px]">
      <div role="tablist" className="-mt-px flex">
        <button type="button" role="tab" aria-selected="false" className="h-[21px] w-[122px] leading-none text-[#8a8a8a]">EURUSDmicro,M5</button>
        <button type="button" role="tab" aria-selected="true" className="h-[21px] w-[118px] border-x border-b border-black bg-white leading-none text-[#222]">GBPUSDmicro,M1</button>
      </div>
      <svg viewBox="0 0 24 8" className="mt-[6px] h-2 w-6" fill="#888"><path d="M4 0v8L0 4zM20 0v8l4-4z" /></svg>
    </div>
  </main>
)

/* ---------- tester ---------- */

const Tester = () => (
  <section className="shrink-0 border-t-2 border-[#a8a8a8] bg-white pr-[2px]">
    <table className="mb-[28px] h-[264px] w-full table-fixed border-collapse text-[11px] leading-none text-[#222]">
      <colgroup>
        <col className="w-[12%]" />
        <col className="w-[19.4%]" />
        <col className="w-[17%]" />
        <col className="w-[17.1%]" />
        <col className="w-[17%]" />
        <col className="w-[17.5%]" />
      </colgroup>
      <tbody>
        {report.map((cells, i) => (
          <tr key={i} className={clsx("h-5 border-b border-[#c8c8c8]", i % 2 === 0 ? "bg-[#ebebeb]" : "bg-white")}>
            {cells.map((cell, j) =>
              cell === "bar" ? (
                <td key={j} colSpan={4} className="pr-[4px] pl-[46px]">
                  <div className="h-[17px] border border-[#2a9d8f] border-l-[#d08080] bg-[#00ff00]" />
                </td>
              ) : (
                <td
                  key={j}
                  className={clsx(
                    "whitespace-nowrap",
                    j % 2 === 1 && (j === 5 ? "pr-[6px] text-right" : "pr-px text-right"),
                    j % 2 === 0 && j > 0 && "pl-[47px]"
                  )}
                >
                  {cell}
                </td>
              )
            )}
          </tr>
        ))}
      </tbody>
    </table>
    <div role="tablist" className="-mr-[2px] flex h-[26px] items-start border-t-2 border-[#444] bg-[#f0f0f0] text-[11px] leading-none text-[#8a8a8a]">
      {["セッティング", "結果", "グラフ", "レポート", "操作履歴"].map((tab) =>
        tab === "レポート" ? (
          <button key={tab} type="button" role="tab" aria-selected="true" className="-mt-[2px] h-[21px] w-[56px] border-x border-b-2 border-[#222] bg-white text-[#222]">
            {tab}
          </button>
        ) : (
          <button key={tab} type="button" role="tab" aria-selected="false" className="flex h-[18px] items-center pl-[9px] first:pl-1">
            <span className={clsx("pr-[9px] leading-[14px]", tab !== "グラフ" && "border-r border-[#777]")}>{tab}</span>
          </button>
        )
      )}
    </div>
  </section>
)

const StatusBar = () => (
  <footer className="flex h-[25px] shrink-0 items-center border-t border-b border-[#b4b4b4] border-b-[#777] text-[11px] leading-none text-[#222]">
    <p className="mr-auto">ーでヘルプが表示されます</p>
    <div className="flex h-[18px] items-center [&>span]:flex [&>span]:h-full [&>span]:items-center [&>span]:border-l [&>span]:border-[#a0a0a0]">
      <span className="w-[118px] pl-[6px]">Default</span>
      <span className="w-[104px]" />
      <span className="w-[72px]" />
      <span className="w-[72px]" />
      <span className="w-[69px]" />
      <span className="w-[70px]" />
      <span className="w-[67px]" />
      <span className="w-[138px] gap-[5px] pl-[5px]">
        <svg viewBox="0 0 24 14" className="h-[14px] w-6">
          {range(8).map((i) => (
            <g key={i}>
              <path d={`M${i * 3} 0h2v${11 - i}h-2z`} fill="#7d8a1e" />
              <path d={`M${i * 3} 14h2v-${2 + i}h-2z`} fill="#1b4a73" />
            </g>
          ))}
        </svg>
        12703/8 kb
      </span>
    </div>
    <svg viewBox="0 0 12 12" className="size-3 self-end"><path d="M1 12 12 1M5 12l7-7M9 12l3-3" stroke="#999" /></svg>
  </footer>
)

const App = () => (
  <div className="relative flex h-screen min-h-[800px] w-full flex-col overflow-hidden border-r border-[#8a8a8a] bg-[#f0f0f0] [font-family:'Open_Sans','Noto_Sans_CJK_JP',sans-serif] [font-feature-settings:'palt']">
    <TopBars />
    <div className="flex min-h-0 flex-1 border-t border-[#a0a0a0]">
      <div className="flex shrink-0 pt-px pb-[5px]">
        <MarketWatch />
        <Navigator />
      </div>
      <Charts />
    </div>
    <Tester />
    <StatusBar />
    {/* blacked-out title and account name */}
    <div className="absolute top-0 left-0 h-[26px] w-[406px] bg-black" />
    <div className="absolute top-[151px] left-[269px] h-[36px] w-[212px] bg-black" />
  </div>
)

export default App
